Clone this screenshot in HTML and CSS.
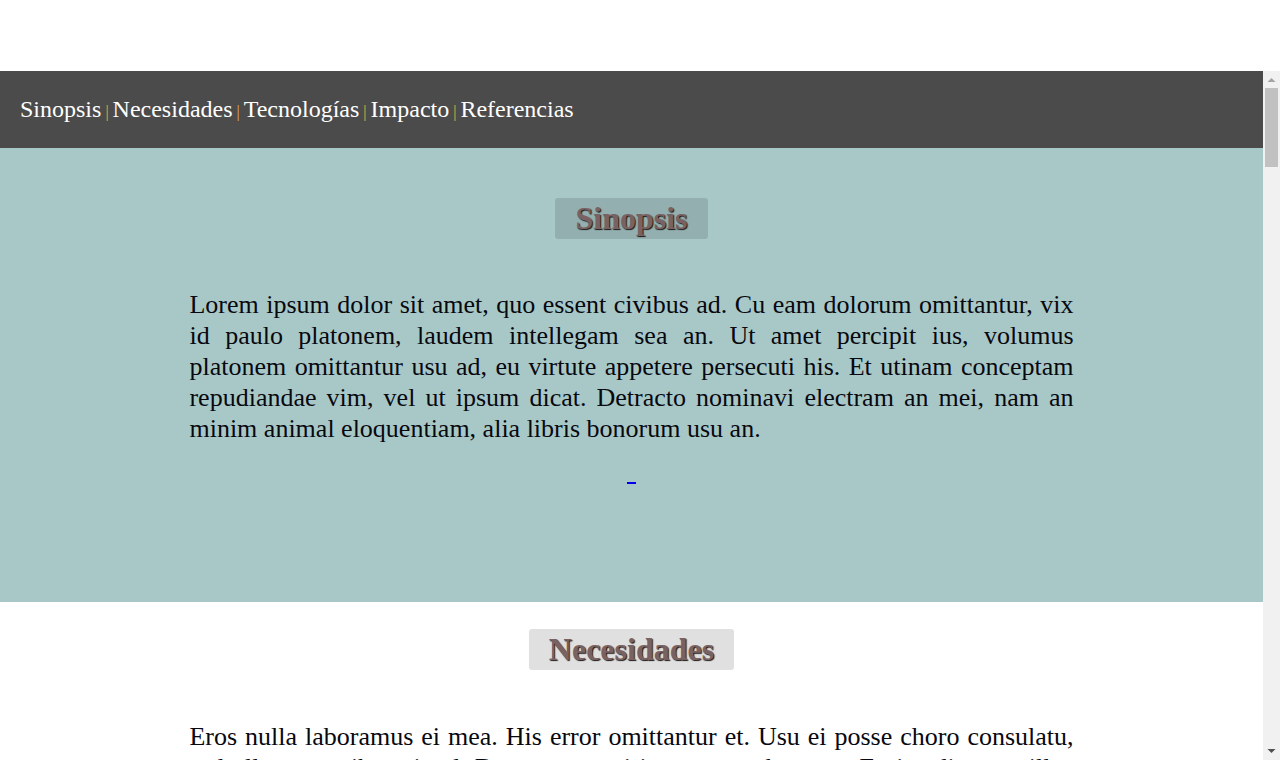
FILE: index.html
```html
<!DOCTYPE html>
<html lang="es">
<head>
<meta charset="utf-8">
<title>Proyecto</title>
<link rel="stylesheet" href="styles.css">
</head>
<body>
<div class="topgap"></div>
<div class="viewport">
  <div class="content">
    <nav class="nav">
      <a class="nav-link" href="#sinopsis">Sinopsis</a><span class="nav-sep"> | </span><a class="nav-link" href="#necesidades">Necesidades</a><span class="nav-sep"> | </span><a class="nav-link" href="#tecnologias">Tecnologías</a><span class="nav-sep"> | </span><a class="nav-link" href="#impacto">Impacto</a><span class="nav-sep"> | </span><a class="nav-link" href="#referencias">Referencias</a>
    </nav>

    <section class="sec sec-alt" id="sinopsis">
      <h2 class="sec-title">Sinopsis</h2>
      <p class="sec-text">Lorem ipsum dolor sit amet, quo essent civibus ad. Cu eam dolorum omittantur, vix id paulo platonem, laudem intellegam sea an. Ut amet percipit ius, volumus platonem omittantur usu ad, eu virtute appetere persecuti his. Et utinam conceptam repudiandae vim, vel ut ipsum dicat. Detracto nominavi electram an mei, nam an minim animal eloquentiam, alia libris bonorum usu an.</p>
      <p class="sec-more"><a class="sec-more-link" href="#">&nbsp;</a></p>
    </section>

    <section class="sec" id="necesidades">
      <h2 class="sec-title">Necesidades</h2>
      <p class="sec-text">Eros nulla laboramus ei mea. His error omittantur et. Usu ei posse choro consulatu, sed ullum erroribus ei vel. Duo ut aeque iriure comprehensam. Ex ius dicat ancillae interpretaris, has ea quas facilisi principes, vim te iriure deseruisse. Cum ne nostrud vivendo percipitur, at noster vocibus est.</p>
    </section>

    <section class="sec sec-alt" id="tecnologias">
      <h2 class="sec-title">Tecnologías</h2>
      <p class="sec-text">Vix an option epicurei, mea cu possit denique. Quot nostrum moderatius eu sea, et eam autem everti luptatum, cu his oportere reprimique. Per erant splendide ne, sed ut velit liber graece.</p>
    </section>

    <section class="sec" id="impacto">
      <h2 class="sec-title">Impacto</h2>
      <p class="sec-text">Ad sea dicant electram, ei nam eripuit intellegebat. Ut nam alii affert intellegam, cum at dicit vocent quaerendum. Nobis legere ne nam, ex nam choro putant recteque.</p>
    </section>

    <section class="sec sec-alt" id="referencias">
      <h2 class="sec-title">Referencias</h2>
      <p class="sec-text">Mea ne ornatus salutatus, labore commune pertinax ea sed. Et vis scripta argumentum, in mei soluta nostrum.</p>
    </section>
  </div>

  <div class="scrollbar" aria-hidden="true">
    <div class="sb-btn">
      <svg class="sb-arrow" width="17" height="17" viewBox="0 0 17 17"><polygon points="4.5,11 12.5,11 8.5,7" fill="#a3a3a3"/></svg>
    </div>
    <div class="sb-track">
      <div class="sb-thumb"></div>
    </div>
    <div class="sb-btn">
      <svg class="sb-arrow" width="17" height="17" viewBox="0 0 17 17"><polygon points="4.5,6 12.5,6 8.5,10" fill="#505050"/></svg>
    </div>
  </div>
</div>
</body>
</html>
```

FILE: styles.css
```css
html, body {
  margin: 0;
  padding: 0;
  background: #ffffff;
  overflow: hidden;
}

.topgap {
  height: 71px;
  background: #ffffff;
}

.viewport {
  height: 689px;
  display: flex;
  font-family: "Liberation Serif", "Times New Roman", serif;
  color: #000;
}

.content {
  flex: 1;
  min-width: 0;
  height: 689px;
  overflow: hidden;
}

/* Navigation bar */
.nav {
  height: 77px;
  box-sizing: border-box;
  background: #4b4b4b;
  padding: 24px 20px 0;
  font-size: 24px;
  line-height: 28px;
  white-space: nowrap;
}

.nav-link {
  color: #ffffff;
  text-decoration: none;
}

.nav-sep {
  color: #e2ad45;
  font-size: 16px;
}

/* Sections */
.sec {
  background: #ffffff;
  text-align: center;
  padding: 27px 0 60px;
}

.sec-alt {
  background: #a8c8c8;
  padding: 50px 0 0;
  height: 454px;
  box-sizing: border-box;
}

#referencias {
  height: 2600px;
}

.sec-title {
  display: inline-block;
  margin: 0;
  padding: 2px 20px;
  font-size: 32px;
  line-height: 37px;
  font-weight: bold;
  color: #7a6262;
  text-shadow: 1px 1px 1px #1c1818;
  background: rgba(0, 0, 0, 0.12);
  border-radius: 3px;
}

.sec-text {
  width: 70%;
  margin: 50px auto 0;
  font-size: 26px;
  line-height: 31px;
  text-align: justify;
  color: #08080f;
}

#necesidades .sec-text {
  margin-top: 51px;
}

.sec-more {
  margin: 13px 0 0;
  font-size: 24px;
  line-height: 31px;
}

.sec-more-link {
  color: #0000ee;
  text-decoration: underline;
  letter-spacing: 3px;
}

/* Scrollbar column */
.scrollbar {
  width: 17px;
  flex: none;
  display: flex;
  flex-direction: column;
  background: #f1f1f1;
}

.sb-btn {
  height: 17px;
  flex: none;
}

.sb-arrow {
  display: block;
}

.sb-track {
  flex: 1;
  padding: 0 2px;
}

.sb-thumb {
  height: 79px;
  background: #c1c1c1;
}
```
